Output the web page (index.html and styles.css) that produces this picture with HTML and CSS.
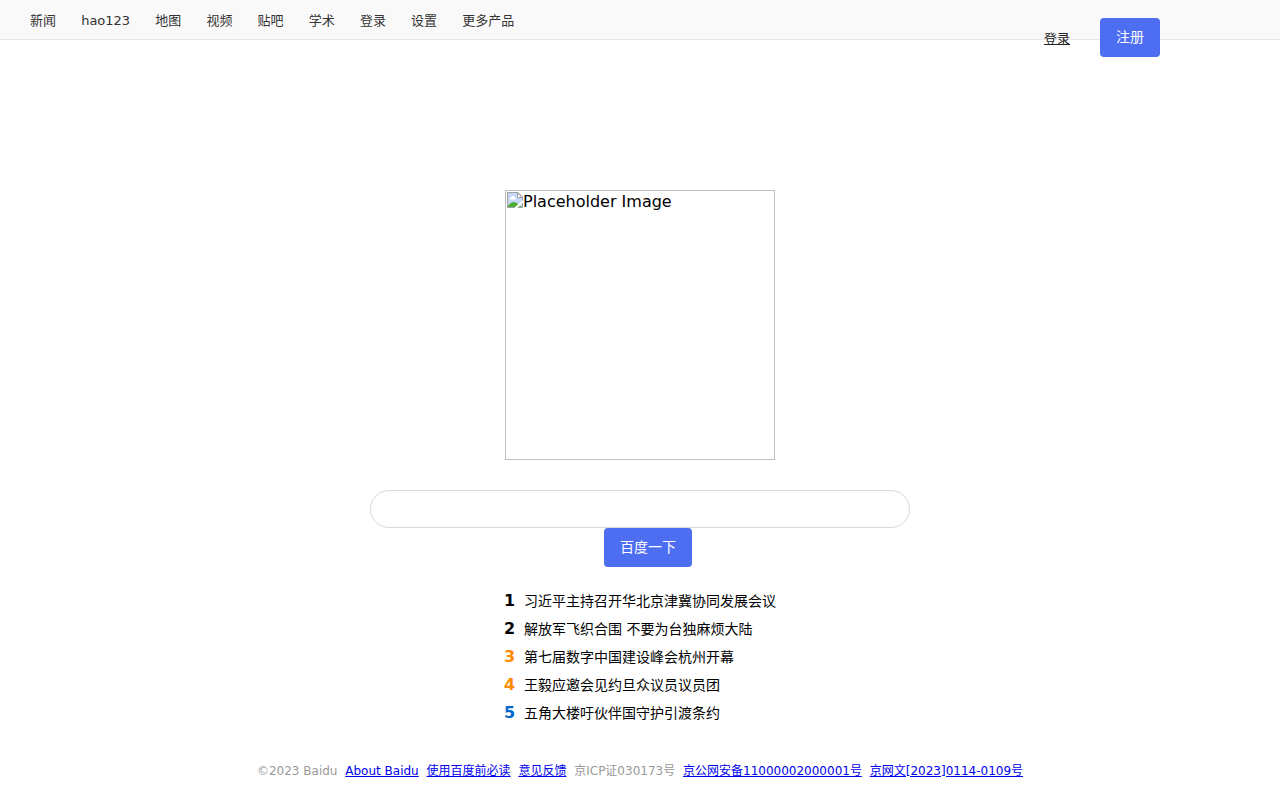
FILE: index.html
```html
<!DOCTYPE html>
<html lang="zh-CN">
<head>
<meta charset="utf-8">
<title>百度一下</title>
<link rel="stylesheet" href="styles.css">
</head>
<body>
<header class="topbar">
  <nav class="nav">
    <a href="#">新闻</a>
    <a href="#">hao123</a>
    <a href="#">地图</a>
    <a href="#">视频</a>
    <a href="#">贴吧</a>
    <a href="#">学术</a>
    <a href="#">登录</a>
    <a href="#">设置</a>
    <a href="#">更多产品</a>
  </nav>
  <div class="account">
    <a class="login" href="#">登录</a>
    <button class="button" type="button">注册</button>
  </div>
</header>
<main class="main">
  <div class="placeholder">
    <svg class="placeholder-icon" width="16" height="16" viewBox="0 0 16 16" aria-hidden="true">
      <path d="M.5.5H11l4.500 4.500v10.500H.5z" fill="#c6d8f8"/>
      <path d="M2.500 7.500q-.5-2 1.500-2 .5-2 2.300-1.500Q8 4.300 8 5.800q1.300.2 1 1.700z" fill="#fff"/>
      <path d="M1 15v-1q2.500-4 6-4 2.500 0 4.500 2.500L15 15z" fill="#4fae35"/>
      <path d="M16 8v2.500L10.500 16H7z" fill="#fff"/>
      <path d="M8 15.500H.5V.5H11l4.500 4.500v3.500M15.500 11v4.500H11" fill="none" stroke="#a0a0a0"/>
      <path d="M10.500 1v4.500H15z" fill="#fff" stroke="#a0a0a0"/>
    </svg>
    <span>Placeholder Image</span>
  </div>
  <form class="search">
    <input class="search-input" type="text" aria-label="搜索">
    <button class="button search-button" type="button">百度一下</button>
  </form>
  <ol class="hot">
    <li><b>1</b><span>习近平主持召开华北京津冀协同发展会议</span></li>
    <li><b>2</b><span>解放军飞织合围 不要为台独麻烦大陆</span></li>
    <li><b class="orange">3</b><span>第七届数字中国建设峰会杭州开幕</span></li>
    <li><b class="orange">4</b><span>王毅应邀会见约旦众议员议员团</span></li>
    <li><b class="blue">5</b><span>五角大楼吁伙伴国守护引渡条约</span></li>
  </ol>
</main>
<footer class="footer">
  <span>©2023 Baidu</span>
  <a href="#">About Baidu</a>
  <a href="#">使用百度前必读</a>
  <a href="#">意见反馈</a>
  <span>京ICP证030173号</span>
  <a href="#">京公网安备11000002000001号</a>
  <a href="#">京网文[2023]0114-0109号</a>
</footer>
</body>
</html>
```

FILE: styles.css
```css
* {
  box-sizing: border-box;
}

body {
  margin: 0;
  background: #fff;
  color: #000;
  font-family: "DejaVu Sans", "Noto Sans CJK SC", sans-serif;
  font-size: 16px;
}

.topbar {
  display: flex;
  justify-content: space-between;
  height: 40px;
  padding: 0 120px 0 30px;
  background: #f9f9f9;
  border-bottom: 1px solid #e8e8e8;
}

.nav {
  font-size: 13px;
  line-height: 42px;
}

.nav a {
  margin-right: 21px;
  color: #333;
  text-decoration: none;
}

.account {
  display: flex;
  align-items: center;
  align-self: flex-start;
  gap: 30px;
  padding-top: 18px;
}

.login {
  color: #222;
  font-size: 13px;
}

.button {
  height: 39px;
  padding: 0 16px;
  border: 0;
  border-radius: 4px;
  background: #4e6ef2;
  color: #fff;
  font-family: inherit;
  font-size: 14px;
  line-height: 39px;
}

.main {
  display: flex;
  flex-direction: column;
  align-items: center;
  padding-top: 150px;
}

.placeholder {
  display: flex;
  align-items: flex-start;
  width: 270px;
  height: 270px;
  padding: 1px;
  border: 1px solid #c0c0c0;
  line-height: 19px;
}

.search {
  display: flex;
  flex-direction: column;
  align-items: center;
  width: 100%;
  margin-top: 30px;
}

.search-input {
  width: 100%;
  max-width: 540px;
  height: 38px;
  padding: 0 16px;
  border: 1px solid #d9d9d9;
  border-radius: 20px;
  background: #fff;
  font: inherit;
}

.search-button {
  margin-left: 16px;
}

.hot {
  margin: 20px 0 0;
  padding: 0;
  list-style: none;
  line-height: 28px;
}

.hot li {
  display: flex;
  gap: 9px;
}

.hot span {
  font-size: 14px;
}

.orange {
  color: #ff8c00;
}

.blue {
  color: #0066cc;
}

.footer {
  margin-top: 36px;
  color: #999;
  font-size: 12px;
  line-height: 16px;
  text-align: center;
}

.footer > * + * {
  margin-left: 4px;
}

.footer a {
  color: #0000ee;
}
```
